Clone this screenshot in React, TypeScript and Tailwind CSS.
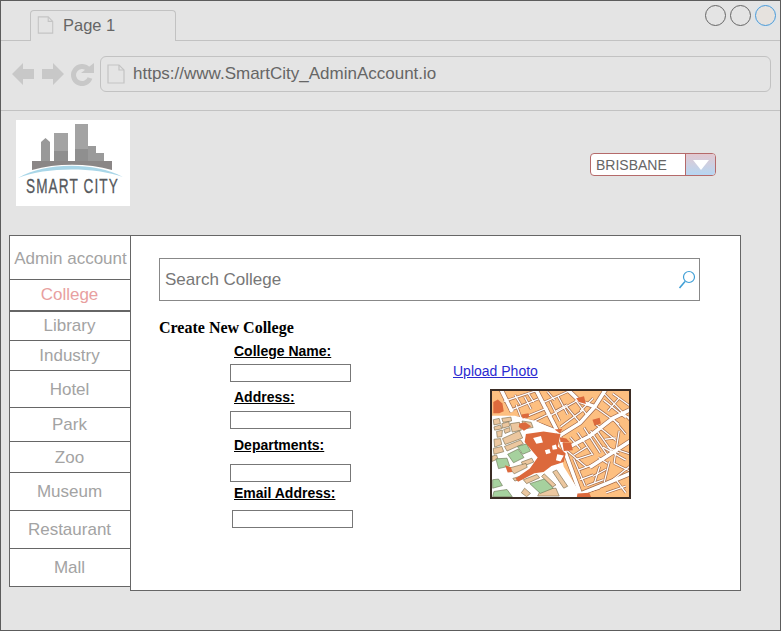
const sideItems = [
  { label: "Admin account", h: "h-[43px] pt-[2px] pl-[2px]", cls: "text-[#a3a3a3]" },
  { label: "College", h: "h-[31px]", cls: "text-[#e8a0a0]" },
  { label: "Library", h: "h-[30px] border-t-2", cls: "text-[#a3a3a3]" },
  { label: "Industry", h: "h-[30px]", cls: "text-[#a3a3a3]" },
  { label: "Hotel", h: "h-[37px] pt-[2px]", cls: "text-[#a3a3a3]" },
  { label: "Park", h: "h-[34px]", cls: "text-[#a3a3a3]" },
  { label: "Zoo", h: "h-[31px] pt-[2px]", cls: "text-[#a3a3a3]" },
  { label: "Museum", h: "h-[38px]", cls: "text-[#a3a3a3]" },
  { label: "Restaurant", h: "h-[38px]", cls: "text-[#a3a3a3]" },
  { label: "Mall", h: "h-[38px]", cls: "text-[#a3a3a3]" },
];

// street grid of the map, in the crop's coordinates
const mainRoads = [
  "165,24 230,150 300,340",
  "24,112 100,112 160,126 228,152",
  "236,166 300,126 345,76 378,24",
  "254,206 330,166 400,112 456,84",
  "58,24 92,92",
  "300,344 380,312 456,280",
  "262,24 300,60 345,76",
  "330,262 456,180",
];
const sideRoads = [
  "66,60 175,24", "84,88 172,52", "112,116 200,80", "150,84 130,46", "190,62 262,30", "205,106 290,58", "160,120 205,98",
  "120,112 104,70", "238,120 208,60", "262,100 232,44", "300,126 258,76", "320,100 286,56",
  "345,76 420,130", "372,56 440,110", "400,36 456,76", "400,112 440,160", "345,128 410,180", "368,30 456,120",
  "270,170 300,205", "292,155 340,225", "312,140 362,218", "332,150 382,222", "352,150 398,215", "376,176 410,172",
  "254,206 320,262", "288,238 336,222", "296,270 350,250", "280,235 316,320", "356,232 384,250", "384,200 420,218", "420,150 404,250",
  "340,290 380,268", "322,318 372,300", "310,340 360,326", "360,260 344,310", "390,244 374,308", "404,250 456,275", "400,300 456,256", "420,210 456,222",
  "100,40 118,70", "140,34 158,62", "200,30 222,56", "225,90 260,70", "240,138 310,86", "300,90 340,50", "385,90 420,50", "420,100 456,110",
  "300,300 340,285", "370,200 440,240", "410,300 440,340", "380,340 440,320", "320,200 280,225",
];
const tans = [
  "34,116 52,112 56,128 36,132", "60,112 88,108 90,120 64,124", "36,138 56,132 60,144 38,148", "44,152 62,148 60,168 46,170",
  "86,128 114,124 120,148 92,154", "62,174 114,150 124,172 70,192", "36,176 56,174 60,192 38,200", "68,198 118,178 126,190 76,212",
  "34,204 60,198 66,214 36,222", "120,246 152,234 158,246 126,258", "84,264 134,250 138,262 98,282", "60,128 82,122 84,136 62,142",
  "30,228 44,224 48,236 30,244", "126,300 168,284 176,294 136,312", "190,282 226,316 216,322 182,290", "130,326 148,342 136,352 120,340",
  "66,146 84,140 86,152 70,158", "122,120 150,124 156,140 128,144", "180,330 226,326 236,350 170,350", "228,270 262,320 250,326 216,276", "94,296 122,288 126,296 100,304",
];
const greens = [
  "78,222 110,206 128,232 96,248", "108,198 136,190 148,212 124,222", "42,236 76,234 84,258 50,266",
  "146,312 190,298 218,326 178,342", "32,300 50,298 62,318 32,326", "36,336 76,330 92,352 32,352",
];
const darks = [
  "34,62 48,54 62,66 66,90 52,96 34,96", "114,128 132,124 150,136 128,150 112,138", "222,146 246,144 238,158",
  "238,170 258,174 268,184 240,184", "246,186 272,186 278,210 250,212",
  "134,160 188,152 240,160 232,198 256,220 250,246 212,258 188,276 160,280 110,306 102,296 146,266 170,232 130,184",
  "288,50 312,44 318,68 296,62", "338,116 360,110 364,128 344,134", "120,100 142,96 144,108 124,112", "292,342 328,340 334,354 290,354",
  "70,256 88,262 92,276 78,278",
];
const holes = [
  "156,172 180,166 186,186 166,190", "192,210 206,206 210,218 196,222", "214,196 226,192 230,206 216,208", "230,222 250,226 240,244 226,240",
];

function MapPicture() {
  return (
    <svg viewBox="30 28 420 325" className="block w-full h-full">
      <rect x="30" y="28" width="420" height="325" fill="#fdbf80" />
      {mainRoads.map((p) => (
        <polyline key={p} points={p} fill="none" stroke="#a0684a" strokeWidth="15" />
      ))}
      {sideRoads.map((p) => (
        <polyline key={p} points={p} fill="none" stroke="#a0684a" strokeWidth="8" />
      ))}
      {sideRoads.map((p) => (
        <polyline key={`w${p}`} points={p} fill="none" stroke="#ffffff" strokeWidth="4" />
      ))}
      {mainRoads.map((p) => (
        <polyline key={`w${p}`} points={p} fill="none" stroke="#ffffff" strokeWidth="11" />
      ))}
      <polygon points="24,104 100,104 165,120 225,150 250,260 300,340 300,360 24,360" fill="#ffffff" />
      {tans.map((p) => (
        <polygon key={p} points={p} fill="#ecc79f" stroke="#7c7050" strokeWidth="2" />
      ))}
      {greens.map((p) => (
        <polygon key={p} points={p} fill="#a6d19e" stroke="#6f7a58" strokeWidth="2" />
      ))}
      {darks.map((p) => (
        <polygon key={p} points={p} fill="#dc693c" />
      ))}
      {holes.map((p) => (
        <polygon key={p} points={p} fill="#ffffff" />
      ))}
    </svg>
  );
}

function Logo() {
  return (
    <svg viewBox="0 0 114 86" className="block w-[114px] h-[86px] bg-white">
      <polygon points="25,22 29.5,18 34,22 34,42 25,42" fill="#999999" />
      <rect x="38" y="13" width="14" height="29" fill="#a3a3a3" />
      <rect x="38" y="31" width="14" height="11" fill="#8f8f8f" />
      <rect x="59" y="4" width="13" height="38" fill="#a3a3a3" />
      <rect x="59" y="29" width="13" height="13" fill="#8f8f8f" />
      <rect x="72" y="26" width="8" height="16" fill="#9a9a9a" />
      <rect x="80" y="33" width="8" height="9" fill="#9a9a9a" />
      <path d="M16 41 H96 V50 C72 43 40 43 16 50 Z" fill="#8a8686" />
      <path d="M2 58 C30 42 78 42 107 57 C78 47 30 47 2 58 Z" fill="#a9d6e8" />
      <text transform="translate(10 73) scale(0.68 1)" textLength="135" lengthAdjust="spacing" fontFamily="'Liberation Sans', sans-serif" fontSize="20" stroke="#55585c" strokeWidth="0.3" fill="#55585c">
        SMART CITY
      </text>
    </svg>
  );
}

function DocIcon({ className }: { className: string }) {
  return (
    <svg viewBox="0 0 18 20" className={className}>
      <path d="M1 1 H12 L17 6 V19 H1 Z" fill="none" stroke="#c4c4c4" strokeWidth="1.2" />
      <path d="M12 1 V6 H17" fill="none" stroke="#c4c4c4" strokeWidth="1.2" />
    </svg>
  );
}

function Field({ label, labelCls, inputCls }: { label: string; labelCls: string; inputCls: string }) {
  return (
    <div>
      <div className={`font-['Liberation_Sans',sans-serif] text-[14px] leading-[16px] font-bold text-black underline ${labelCls}`}>{label}</div>
      <div className={`h-[18px] w-[121px] border border-[#777777] bg-white ${inputCls}`} />
    </div>
  );
}

export default function App() {
  return (
    <div className="w-[781px] h-[631px] border border-[#5c5c5c] bg-[#e4e4e4] font-['Liberation_Sans',sans-serif] overflow-hidden">
      <div className="relative h-[40px] border-b border-[#c2c2c2]">
        <div className="absolute left-[29px] top-[9px] h-[31px] w-[146px] rounded-t-[4px] border border-b-0 border-[#c2c2c2] bg-[#e4e4e4] flex items-center pb-[2px]">
          <DocIcon className="ml-[6px] w-[17px] h-[18px]" />
          <span className="ml-[9px] text-[16.5px] text-[#666666]">Page 1</span>
        </div>
        <div className="absolute right-[4px] top-[4px] flex gap-[4px]">
          <div className="w-[21px] h-[21px] rounded-full border border-[#666666]" />
          <div className="w-[21px] h-[21px] rounded-full border border-[#666666]" />
          <div className="w-[21px] h-[21px] rounded-full border border-[#4a9ad8] bg-[#e6e2de] shadow-[0_0_3px_#cfe6f7]" />
        </div>
      </div>
      <div className="h-[70px] border-b border-[#c2c2c2] flex items-center pl-[11px] pr-[9px] pb-[4px]">
        <svg viewBox="0 0 82 24" className="w-[82px] h-[24px] shrink-0">
          <path d="M0 12 L11 1 V7 H22 V17 H11 V23 Z" fill="#c8c8c8" />
          <path d="M52 12 L41 1 V7 H30 V17 H41 V23 Z" fill="#c8c8c8" />
          <path d="M78 16 A8.5 8.5 0 1 1 76 7" fill="none" stroke="#c8c8c8" strokeWidth="5" />
          <polygon points="69,11 82,11 82,1" fill="#c8c8c8" />
        </svg>
        <div className="ml-[6px] flex-1 h-[36px] rounded-[6px] border border-[#c2c2c2] flex items-center">
          <DocIcon className="ml-[6px] w-[18px] h-[20px]" />
          <span className="ml-[8px] text-[17px] text-[#666666]">https://www.SmartCity_AdminAccount.io</span>
        </div>
      </div>
      <div className="h-[124px] relative pl-[15px] pt-[9px]">
        <Logo />
        <div className="absolute left-[589px] top-[42px] w-[126px] h-[23px] rounded-[4px] border border-[#b56a6a] bg-white flex overflow-hidden">
          <div className="flex-1 pl-[5px] text-[14px] leading-[23px] text-[#666666]">BRISBANE</div>
          <div className="w-[30px] border-l border-[#b56a6a] bg-gradient-to-b from-[#e2c8d0] to-[#b6d6f2] flex items-center justify-center">
            <svg viewBox="0 0 16 10" className="w-[16px] h-[10px]">
              <polygon points="0,0 16,0 8,10" fill="#ffffff" />
            </svg>
          </div>
        </div>
      </div>
      <div className="flex items-start pl-[8px]">
        <div className="w-[122px] border border-[#666666] bg-white shrink-0">
          {sideItems.map((item, i) => (
            <div
              key={item.label}
              className={`${item.h} box-border flex items-center justify-center pr-[1px] text-[17px] border-[#666666] ${i > 0 && !item.h.includes("border-t-2") ? "border-t" : ""} ${item.cls}`}
            >
              {item.label}
            </div>
          ))}
        </div>
        <div className="w-[611px] h-[356px] -ml-px border border-[#666666] bg-white pl-[28px] pt-[22px]">
          <div className="w-[541px] h-[43px] border border-[#888888] flex items-center justify-between pl-[5px] pr-[3px]">
            <span className="text-[17px] text-[#777777]">Search College</span>
            <svg viewBox="0 0 18 20" className="w-[18px] h-[20px]">
              <circle cx="11" cy="7" r="5.5" fill="none" stroke="#3f9fd6" strokeWidth="1.2" />
              <path d="M7 11.5 L1.5 18" stroke="#3f9fd6" strokeWidth="1.6" />
            </svg>
          </div>
          <div className="mt-[18px] font-['Liberation_Serif',serif] font-bold text-[16px] leading-[18px] text-black">Create New College</div>
          <div className="flex">
            <div className="ml-[71px] w-[223px] shrink-0 pt-[6px]">
              <Field label="College Name:" labelCls="ml-[4px] mb-[5px]" inputCls="" />
              <Field label="Address:" labelCls="ml-[4px] mt-[7px] mb-[6px]" inputCls="" />
              <Field label="Departments:" labelCls="ml-[4px] mt-[8px] mb-[11px]" inputCls="" />
              <Field label="Email Address:" labelCls="ml-[4px] mt-[3px] mb-[9px]" inputCls="ml-[2px]" />
            </div>
            <div className="pt-[26px]">
              <span className="block text-[14px] leading-[16px] text-[#2a2ad0] underline">Upload Photo</span>
              <div className="ml-[37px] mt-[10px] w-[141px] h-[110px] border-2 border-[#3a2c24]">
                <MapPicture />
              </div>
            </div>
          </div>
        </div>
      </div>
    </div>
  );
}
